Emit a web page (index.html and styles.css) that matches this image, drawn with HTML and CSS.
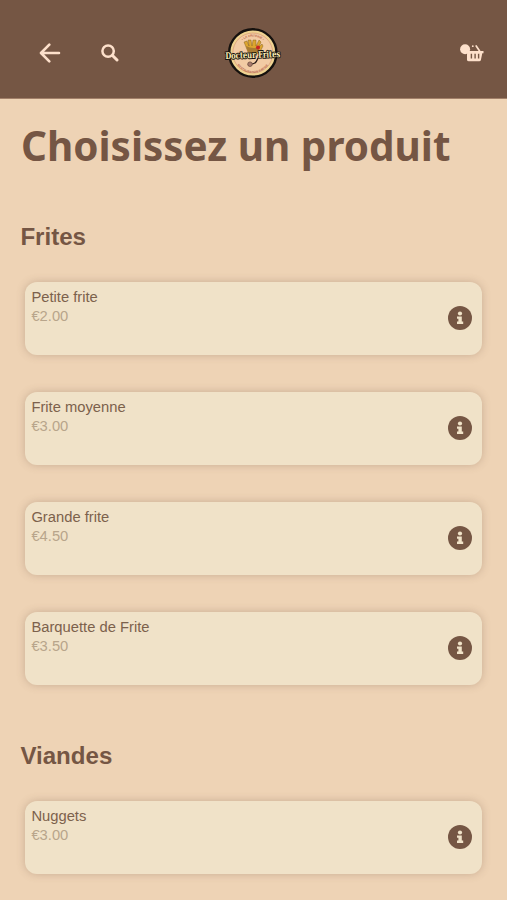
FILE: index.html
```html
<!DOCTYPE html>
<html lang="fr">
<head>
<meta charset="utf-8">
<meta name="viewport" content="width=device-width, initial-scale=1">
<title>Docteur Frites</title>
<link rel="stylesheet" href="styles.css">
</head>
<body>
<svg width="0" height="0" class="defs" aria-hidden="true">
  <symbol id="info" viewBox="0 0 24 24">
    <circle cx="12" cy="12" r="12" fill="#755644"/>
    <circle cx="12" cy="7.5" r="2.1" fill="#f0e2c8"/>
    <path d="M9 10.4h4.8v5.2h1.4v2.4H9v-2.4h1.4V12.8H9z" fill="#f0e2c8"/>
  </symbol>
</svg>
<header class="bar">
  <div class="bar-left">
    <svg class="back" viewBox="0 0 22 20"><path d="M20 10H2.2M10.3 1.7L2 10l8.3 8.3" fill="none" stroke="#fde0cb" stroke-width="2.6" stroke-linecap="round" stroke-linejoin="round"/></svg>
    <svg class="search" viewBox="0 0 18 18"><circle cx="7.1" cy="7.1" r="5.7" fill="none" stroke="#fde0cb" stroke-width="2.5"/><path d="M11.5 11.5l4.5 4.5" stroke="#fde0cb" stroke-width="3" stroke-linecap="round"/></svg>
  </div>
  <svg class="logo" viewBox="0 0 60 52">
    <circle cx="29.8" cy="26" r="23.7" fill="#efd391" stroke="#15110e" stroke-width="2.4"/>
    <circle cx="29.8" cy="26" r="20" fill="#f2cba4" stroke="#d79a75" stroke-width=".7"/>
    <path id="ring" d="M13.5 26a16.3 16.3 0 0 1 32.6 0" fill="none"/>
    <path id="ring-low" d="M10.8 27a19 19 0 0 0 38 0" fill="none"/>
    <text class="ring-text"><textPath href="#ring" startOffset="50%">• LA FRITERIE •</textPath></text>
    <text class="ring-text"><textPath href="#ring-low" startOffset="50%">RESTAURATION RAPIDE</textPath></text>
    <path d="M25 25l-4-10 3-1 2 5-1-6 3 0 1 6 1-6 3 0 0 6 3-6 2 2-2 5 3-3 1 2-4 8z" fill="#dca52f" stroke="#725016" stroke-width=".4"/>
    <path d="M23 19q8 4 14 0l-2 6H25z" fill="#a97b32"/>
    <circle cx="35" cy="20.5" r="2" fill="#c92222"/>
    <path d="M35 31q-2 6-6 6" fill="none" stroke="#2a1b17" stroke-width="1.2"/>
    <circle cx="27" cy="37.2" r="2.3" fill="#a87b6d" stroke="#604438" stroke-width=".7"/>
    <text class="logo-outline" x="29.8" y="31" textLength="55" lengthAdjust="spacingAndGlyphs" transform="rotate(-2 30 29)">Docteur Frites</text>
  </svg>
  <svg class="basket" viewBox="0 0 26 20">
    <path d="M17.2 3l3.4 5" stroke="#fde0cb" stroke-width="1.7" stroke-linecap="round"/>
    <circle cx="13.8" cy="3.2" r=".9" fill="#fde0cb"/>
    <path d="M8.2 8h16.3v2.3h-1.2l-1.4 6.6q-.3 1.3-1.7 1.3H9.7q-1.4 0-1.7-1.3v-5z" fill="#fde0cb"/>
    <path d="M12.4 10.8v4.8M16.1 10.8v4.8M19.6 10.8v4.8" stroke="#755644" stroke-width="1.4"/>
    <circle cx="6.1" cy="6.3" r="5" fill="#fde0cb"/>
  </svg>
</header>
<main>
  <h1>Choisissez un produit</h1>
  <section>
    <h2>Frites</h2>
    <div class="products">
      <article class="card"><div><div class="name">Petite frite</div><div class="price">€2.00</div></div><svg class="info"><use href="#info"/></svg></article>
      <article class="card"><div><div class="name">Frite moyenne</div><div class="price">€3.00</div></div><svg class="info"><use href="#info"/></svg></article>
      <article class="card"><div><div class="name">Grande frite</div><div class="price">€4.50</div></div><svg class="info"><use href="#info"/></svg></article>
      <article class="card"><div><div class="name">Barquette de Frite</div><div class="price">€3.50</div></div><svg class="info"><use href="#info"/></svg></article>
    </div>
  </section>
  <section>
    <h2>Viandes</h2>
    <div class="products">
      <article class="card"><div><div class="name">Nuggets</div><div class="price">€3.00</div></div><svg class="info"><use href="#info"/></svg></article>
    </div>
  </section>
</main>
</body>
</html>
```
FILE: styles.css
```css
* { box-sizing: border-box; }
body {
  margin: 0;
  height: 900px;
  overflow: hidden;
  background: #eed3b5;
  color: #755644;
  font-family: "Liberation Sans", Arial, sans-serif;
}
.defs { display: none; }
.bar {
  height: 99px;
  padding: 8px 22px 0 39px;
  background: #755644;
  border-bottom: 1px solid #a28069;
  display: grid;
  grid-template-columns: 184px 60px 1fr;
  align-items: center;
}
.bar-left { display: flex; align-items: center; gap: 40px; }
.back { width: 22px; height: 20px; }
.search { width: 18px; height: 18px; }
.logo { width: 60px; height: 52px; overflow: visible; }
.basket { width: 26px; height: 20px; justify-self: end; }
.ring-text { font-size: 3px; font-weight: bold; fill: #b9694e; text-anchor: middle; }
.logo-outline {
  font-family: "DejaVu Serif", serif;
  font-size: 9px;
  font-weight: bold;
  text-anchor: middle;
  fill: #fff0b8;
  stroke: #15110e;
  stroke-width: 2;
  paint-order: stroke;
}
h1 {
  margin: 0;
  padding: 17px 0 0 21px;
  height: 119px;
  font: bold 40.45px/60px "Noto Sans", sans-serif;
  white-space: nowrap;
}
h2 {
  margin: 0;
  padding-left: 20.4px;
  font-size: 24.1px;
  line-height: 38px;
}
.products {
  display: flex;
  flex-direction: column;
  gap: 36.7px;
  padding: 26px 25px 51.8px 25.4px;
}
.card {
  height: 73.3px;
  padding: 5.7px 10px 0 6px;
  border-radius: 12px;
  background: #f0e2c8;
  box-shadow: 0 0 9px rgba(117, 86, 68, .3);
  display: flex;
  justify-content: space-between;
}
.name, .price { font-size: 14.75px; line-height: 19.4px; }
.name { color: #7c614c; }
.price { color: #b8a58b; }
.info { width: 24px; height: 24px; margin-top: 18.4px; }
```
